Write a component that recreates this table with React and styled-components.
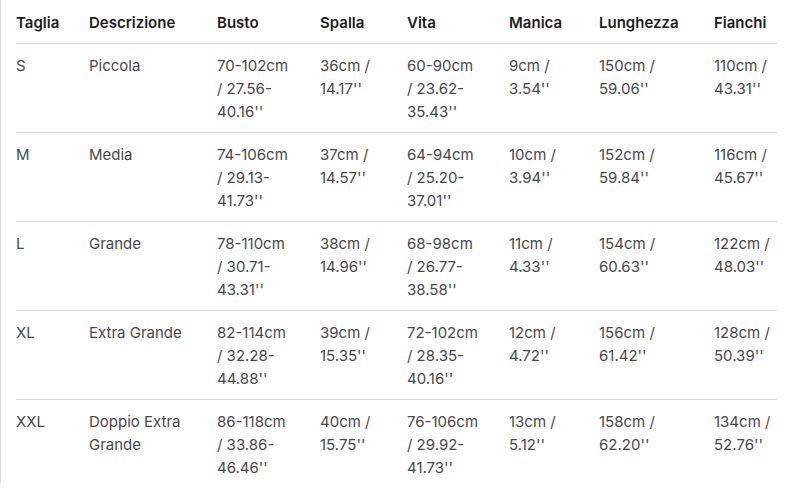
import React from 'react'
import styled, { createGlobalStyle } from 'styled-components';

const GlobalStyle = createGlobalStyle`
  html, body {
    margin: 0;
    padding: 0;
    background: #ffffff;
  }
  body {
    font-family: Inter, "Noto Sans", sans-serif;
  }
`;

const Frame = styled.div`
  width: 761px;
  height: 483px;
  padding-left: 15px;
  border-left: 1px solid #dcdce2;
  overflow: hidden;
  box-sizing: content-box;
`;

const Table = styled.table`
  width: 761px;
  border-collapse: collapse;
  table-layout: fixed;
  font-size: 15px;
  line-height: 23px;
`;

const HeadCell = styled.th`
  text-align: left;
  vertical-align: top;
  font-weight: 600;
  color: #1c1c1e;
  padding: 11px 28px 9px 0;
  border-bottom: 1px solid #d8d8de;
  &:last-child {
    padding-right: 0;
  }
`;

const Row = styled.tr`
  border-bottom: ${p => (p.$last ? 'none' : '1px solid #d8d8de')};
`;

const Cell = styled.td`
  text-align: left;
  vertical-align: top;
  font-weight: 400;
  color: #48484c;
  padding: 10px 28px 9px 0;
  &:last-child {
    padding-right: 0;
  }
`;

const columns = [
  { key: 'size', label: 'Taglia', width: 73 },
  { key: 'desc', label: 'Descrizione', width: 128 },
  { key: 'bust', label: 'Busto', width: 103 },
  { key: 'shoulder', label: 'Spalla', width: 87 },
  { key: 'waist', label: 'Vita', width: 102 },
  { key: 'sleeve', label: 'Manica', width: 90 },
  { key: 'length', label: 'Lunghezza', width: 115 },
  { key: 'hips', label: 'Fianchi', width: 63 },
];

const rows = [
  { size: 'S', desc: 'Piccola', bust: "70-102cm / 27.56-40.16''", shoulder: "36cm / 14.17''", waist: "60-90cm / 23.62-35.43''", sleeve: "9cm / 3.54''", length: "150cm / 59.06''", hips: "110cm / 43.31''" },
  { size: 'M', desc: 'Media', bust: "74-106cm / 29.13-41.73''", shoulder: "37cm / 14.57''", waist: "64-94cm / 25.20-37.01''", sleeve: "10cm / 3.94''", length: "152cm / 59.84''", hips: "116cm / 45.67''" },
  { size: 'L', desc: 'Grande', bust: "78-110cm / 30.71-43.31''", shoulder: "38cm / 14.96''", waist: "68-98cm / 26.77-38.58''", sleeve: "11cm / 4.33''", length: "154cm / 60.63''", hips: "122cm / 48.03''" },
  { size: 'XL', desc: 'Extra Grande', bust: "82-114cm / 32.28-44.88''", shoulder: "39cm / 15.35''", waist: "72-102cm / 28.35-40.16''", sleeve: "12cm / 4.72''", length: "156cm / 61.42''", hips: "128cm / 50.39''" },
  { size: 'XXL', desc: 'Doppio Extra Grande', bust: "86-118cm / 33.86-46.46''", shoulder: "40cm / 15.75''", waist: "76-106cm / 29.92-41.73''", sleeve: "13cm / 5.12''", length: "158cm / 62.20''", hips: "134cm / 52.76''" },
];

const App = () => {
  return (
    <>
      <GlobalStyle />
      <Frame>
        <Table>
          <colgroup>
            {columns.map(c => <col key={c.key} style={{ width: c.width }} />)}
          </colgroup>
          <thead>
            <tr>
              {columns.map(c => <HeadCell key={c.key}>{c.label}</HeadCell>)}
            </tr>
          </thead>
          <tbody>
            {rows.map((r, i) => (
              <Row key={r.size} $last={i === rows.length - 1}>
                {columns.map(c => <Cell key={c.key}>{r[c.key]}</Cell>)}
              </Row>
            ))}
          </tbody>
        </Table>
      </Frame>
    </>
  )
}

export default App;
